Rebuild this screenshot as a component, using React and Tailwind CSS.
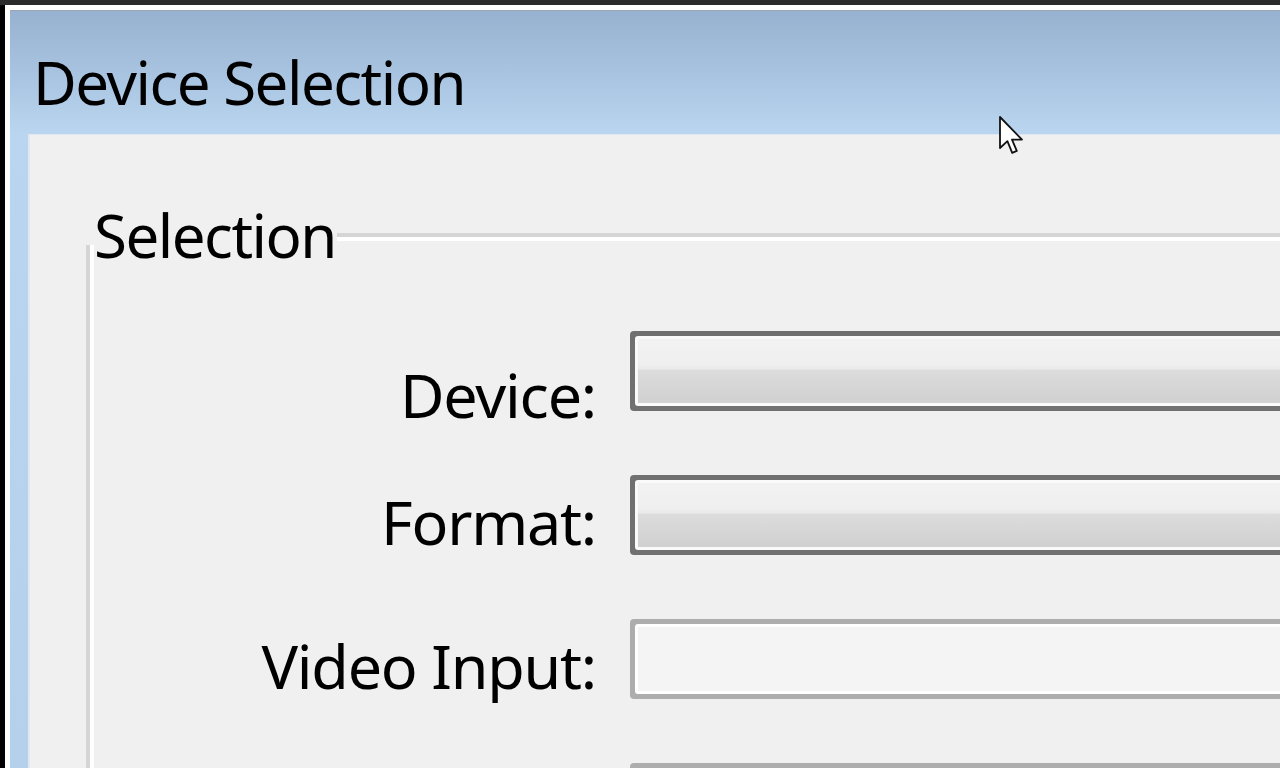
import React from "react";

const font = { fontFamily: '"Noto Sans", "Open Sans", "DejaVu Sans", sans-serif' };

function Combo({ disabled }) {
  if (disabled) {
    return (
      <div className="h-[80px] w-[700px] rounded-[4px] border-[5px] border-[#adadad] bg-[#adadad]">
        <div className="h-full w-full rounded-[3px] border-[3px] border-white bg-[#f4f4f4]" />
      </div>
    );
  }
  return (
    <div className="h-[80px] w-[700px] rounded-[4px] border-[5px] border-[#707070] bg-[#707070]">
      <div className="h-full w-full rounded-[3px] border-[3px] border-[#fafafa] bg-[linear-gradient(to_bottom,#f2f2f2_0%,#efefef_40%,#e9e9e9_47%,#dcdcdc_49%,#d0d0d0_100%)]" />
    </div>
  );
}

function Row({ label, labelTop, disabled }) {
  return (
    <div className="flex h-[80px] items-start">
      <div
        className="w-[502px] shrink-0 text-right text-[61px] leading-none tracking-[-1.2px] text-black"
        style={{ marginTop: labelTop }}
      >
        {label}
      </div>
      <div className="ml-[34px]">
        <Combo disabled={disabled} />
      </div>
    </div>
  );
}

function Cursor() {
  return (
    <svg
      className="absolute left-[999px] top-[111px]"
      width="28"
      height="40"
      viewBox="0 0 14 20"
    >
      <path
        d="M0.5 0.5 L0.5 16 L4.2 12.6 L6.6 18.4 L8.9 17.4 L6.5 11.8 L11.5 11.8 Z"
        fill="#ffffff"
        stroke="#111"
        strokeWidth="0.9"
        strokeLinejoin="round"
      />
    </svg>
  );
}

export default function App() {
  return (
    <div
      className="relative h-[768px] w-[1280px] overflow-hidden border-t-[5px] border-[#2b2b2b] bg-black pl-[5px]"
      style={font}
    >
      <div className="h-full bg-white pl-[5px] pt-[5px]">
        <div className="flex h-full flex-col border-t border-[#9aa6b4] bg-[linear-gradient(to_bottom,#97b1d0_0px,#b9d5ef_122px,#b5d0ea_100%)]">
          {/* title bar */}
          <div className="h-[123px] shrink-0 pl-[23px] pt-[41px]">
            <div className="text-[60px] leading-none tracking-[-1.5px] text-black">Device Selection</div>
          </div>
          {/* client area */}
          <div className="ml-[18px] flex-1 border-l-2 border-t border-[#dfe7f1] bg-[#f0f0f0] pl-[56px] pt-[98px]">
            <div className="relative h-full border-l-4 border-t-4 border-[#d5d5d5]">
              <div className="absolute left-[-4px] top-[-32px] h-[40px] bg-[#f0f0f0] pl-[8px] pr-[1px] text-[60px] leading-none tracking-[-1.5px] text-black">
                Selection
              </div>
              <div className="h-full border-l-4 border-t-4 border-white pt-[90px]">
                <div className="flex flex-col gap-[64px]">
                  <Row label="Device:" labelTop="33px" />
                  <Row label="Format:" labelTop="16px" />
                  <Row label="Video Input:" labelTop="16px" disabled />
                  <Row label="" labelTop="16px" disabled />
                </div>
              </div>
            </div>
          </div>
        </div>
      </div>
      <Cursor />
    </div>
  );
}
